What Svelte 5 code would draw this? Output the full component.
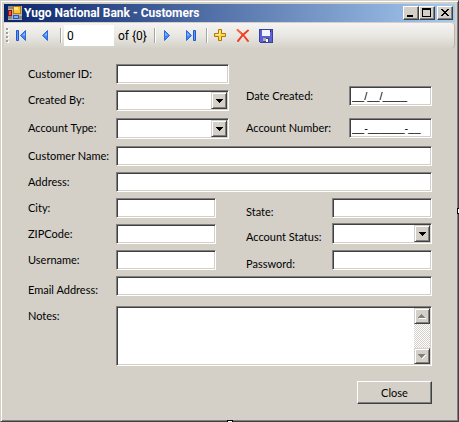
<script lang="ts">
  let position = $state('0');
  let dateCreated = $state('__/__/____');
  let accountNumber = $state('__-______-__');
</script>

{#snippet combo(id: string)}
  <span class="combo">
    <select {id} class="sunken">
      <option value=""></option>
    </select>
    <span class="drop raised" aria-hidden="true">
      <svg width="7" height="4" viewBox="0 0 7 4" shape-rendering="crispEdges">
        <path d="M0 0h7v1H6v1H5v1H4v1H3V3H2V2H1V1H0z" fill="#000" />
      </svg>
    </span>
  </span>
{/snippet}

<main class="window">
  <header class="titlebar">
    <svg class="app-icon" width="16" height="16" viewBox="0 0 16 16" shape-rendering="crispEdges" aria-hidden="true">
      <path d="M1 1h14v14H1z" fill="#b8b4ac" />
      <path d="M1 1h5v3H1zM1 11h4v3H1zM12 11h3v3h-3z" fill="#8a8884" />
      <path d="M6 1h8v8H6z" fill="#b97a08" />
      <path d="M7 2h6v6H7z" fill="#ffc62e" />
      <path d="M7 2h4v3H7z" fill="#ffe78a" />
      <path d="M1 5h4v6H1z" fill="#8e1212" />
      <path d="M2 6h2v4H2z" fill="#f0503c" />
      <path d="M6 10h6v4H6z" fill="#2458c0" />
      <path d="M7 11h4v2H7z" fill="#78b0ff" />
    </svg>
    <h1>Yugo National Bank - Customers</h1>
    <div class="caption-buttons">
      <button class="raised" aria-label="Minimize">
        <svg width="10" height="10" viewBox="0 0 10 10" shape-rendering="crispEdges"><path d="M1 7h6v2H1z" /></svg>
      </button>
      <button class="raised" aria-label="Maximize">
        <svg width="10" height="10" viewBox="0 0 10 10" shape-rendering="crispEdges">
          <path d="M0 0h9v9H0zM1 2v6h7V2z" fill-rule="evenodd" />
        </svg>
      </button>
      <button class="raised close" aria-label="Close window">
        <svg width="10" height="10" viewBox="0 0 10 10" shape-rendering="crispEdges">
          <path d="M1 1h2v1h1v1h2V2h1V1h2v1H8v1H7v1H6v1h1v1h1v1h1v1H7V7H6V6H4v1H3v1H1V7h1V6h1V5h1V4H3V3H2V2H1z" />
        </svg>
      </button>
    </div>
  </header>

  <div class="toolbar" role="toolbar" aria-label="Records">
    <svg class="grip" width="3" height="15" viewBox="0 0 3 15" shape-rendering="crispEdges" aria-hidden="true">
      <path d="M1 1h2v2H1zM1 5h2v2H1zM1 9h2v2H1zM1 13h2v2H1z" fill="#fff" />
      <path d="M0 0h2v2H0zM0 4h2v2H0zM0 8h2v2H0zM0 12h2v2H0z" fill="#a09d94" />
    </svg>
    <button aria-label="Move first">
      <svg width="16" height="16" viewBox="0 0 16 16">
        <path d="M2.500 2.500h2v10h-2z" fill="#5b9bff" stroke="#2257c9" />
        <path d="M11.500 2.500v10L6.500 7.500z" fill="#3f85f7" stroke="#2f68dc" stroke-linejoin="round" />
        <path d="M11 4.500v3H8z" fill="#8dbcff" />
      </svg>
    </button>
    <button aria-label="Move previous">
      <svg width="16" height="16" viewBox="0 0 16 16">
        <path d="M10.500 2.500v10L5.500 7.500z" fill="#3f85f7" stroke="#2f68dc" stroke-linejoin="round" />
        <path d="M10 4.500v3H7z" fill="#8dbcff" />
      </svg>
    </button>
    <span class="separator"></span>
    <input class="position" aria-label="Position" bind:value={position} />
    <span class="count">of &#123;0&#125;</span>
    <span class="separator"></span>
    <button aria-label="Move next">
      <svg width="16" height="16" viewBox="0 0 16 16">
        <path d="M4.500 2.500v10L9.500 7.500z" fill="#3f85f7" stroke="#2f68dc" stroke-linejoin="round" />
        <path d="M5 4.500v3h3z" fill="#8dbcff" />
      </svg>
    </button>
    <button aria-label="Move last">
      <svg width="16" height="16" viewBox="0 0 16 16">
        <path d="M3.500 2.500v10L8.500 7.500z" fill="#3f85f7" stroke="#2f68dc" stroke-linejoin="round" />
        <path d="M4 4.500v3h3z" fill="#8dbcff" />
        <path d="M10.500 2.500h2v10h-2z" fill="#5b9bff" stroke="#2257c9" />
      </svg>
    </button>
    <span class="separator"></span>
    <button aria-label="Add new">
      <svg width="16" height="16" viewBox="0 0 16 16">
        <path d="M6.500 1.500h3v4h4v3h-4v4h-3v-4h-4v-3h4z" fill="#ffd84a" stroke="#b07808" />
        <path d="M7.500 3v3.500H4" fill="none" stroke="#fff0a0" />
      </svg>
    </button>
    <button aria-label="Delete">
      <svg width="16" height="16" viewBox="0 0 16 16">
        <path d="M2.500 2C6 4.500 10 8.500 13 13M13 2.500C9 5.500 5.500 9 3 13" fill="none" stroke="#f23a1c" stroke-width="2" stroke-linecap="round" />
        <path d="M2 2C4 3 5 4.500 6 5.500" fill="none" stroke="#ff8a6a" />
      </svg>
    </button>
    <button aria-label="Save">
      <svg width="16" height="16" viewBox="0 0 16 16" shape-rendering="crispEdges">
        <path d="M1 1h14v14H2v-1H1z" fill="#3a3fa8" />
        <path d="M2 2h12v12H2z" fill="#5c62d6" />
        <path d="M4 2h8v6H4z" fill="#f4f6ff" />
        <path d="M12 2h1v2h-1z" fill="#23286e" />
        <path d="M5 10h6v4H5z" fill="#444a60" />
        <path d="M5 10h3v3H5z" fill="#a8acb8" />
        <path d="M8 11h2v3H8z" fill="#fff" />
      </svg>
    </button>
  </div>

  <form onsubmit={(e) => e.preventDefault()}>
    <div class="columns">
      <div class="stack left">
        <div class="row"><label for="customer-id">Customer ID:</label><input id="customer-id" class="sunken" /></div>
        <div class="row tall"><label for="created-by">Created By:</label>{@render combo('created-by')}</div>
        <div class="row tall"><label for="account-type">Account Type:</label>{@render combo('account-type')}</div>
      </div>
      <div class="stack masked">
        <div class="row"><label for="date-created">Date Created:</label><input id="date-created" class="sunken" bind:value={dateCreated} /></div>
        <div class="row"><label for="account-number">Account Number:</label><input id="account-number" class="sunken" bind:value={accountNumber} /></div>
      </div>
    </div>

    <div class="row"><label for="customer-name">Customer Name:</label><input id="customer-name" class="sunken" /></div>
    <div class="row"><label for="address">Address:</label><input id="address" class="sunken" /></div>

    <div class="columns">
      <div class="stack left short">
        <div class="row"><label for="city">City:</label><input id="city" class="sunken" /></div>
        <div class="row"><label for="zip">ZIPCode:</label><input id="zip" class="sunken" /></div>
        <div class="row"><label for="username">Username:</label><input id="username" class="sunken" autocomplete="off" /></div>
      </div>
      <div class="stack status">
        <div class="row low"><label for="state">State:</label><input id="state" class="sunken" /></div>
        <div class="row low tall"><label for="account-status">Account Status:</label>{@render combo('account-status')}</div>
        <div class="row low"><label for="password">Password:</label><input id="password" type="password" class="sunken" autocomplete="off" /></div>
      </div>
    </div>

    <div class="row low"><label for="email">Email Address:</label><input id="email" class="sunken" /></div>

    <div class="row notes">
      <label for="notes">Notes:</label>
      <div class="memo sunken">
        <textarea id="notes"></textarea>
        <div class="scrollbar">
          <button type="button" class="raised" aria-label="Scroll up" disabled>
            <svg width="8" height="5" viewBox="0 0 8 5" shape-rendering="crispEdges">
              <path d="M1 4h7v1H1z" fill="#fff" />
              <path d="M3 0h1v1h1v1h1v1h1v1H0V3h1V2h1V1h1z" fill="#808080" />
            </svg>
          </button>
          <button type="button" class="raised" aria-label="Scroll down" disabled>
            <svg width="8" height="5" viewBox="0 0 8 5" shape-rendering="crispEdges">
              <path d="M7 1h1v1H7v1H6v1H5v1H4V4h1V3h1V2h1z" fill="#fff" />
              <path d="M0 0h7v1H6v1H5v1H4v1H3V3H2V2H1V1H0z" fill="#808080" />
            </svg>
          </button>
        </div>
      </div>
    </div>

    <div class="actions">
      <button type="button" class="raised push">Close</button>
    </div>
  </form>

  <span class="handle handle-right"></span>
  <span class="handle handle-bottom"></span>
</main>

<style>
  :global(body) {
    background: #d4d0c8;
  }

  .window {
    position: relative;
    box-sizing: border-box;
    min-height: 100vh;
    padding: 3px;
    background: #d4d0c8;
    border: 1px solid;
    border-color: #d4d0c8 #404040 #404040 #d4d0c8;
    box-shadow: inset 1px 1px #fff, inset -1px -1px #808080;
    font-family: Lato, 'Liberation Sans', sans-serif;
    font-size: 11px;
    line-height: 14px;
    color: #000;
  }

  button,
  input,
  select,
  textarea {
    box-sizing: border-box;
    margin: 0;
    padding: 0;
    border: 0;
    border-radius: 0;
    font: inherit;
    color: inherit;
    background: none;
    appearance: none;
    outline: none;
  }

  svg {
    display: block;
    flex: none;
  }

  .sunken {
    background: #fff;
    border: 1px solid;
    border-color: #808080 #fff #fff #808080;
    box-shadow: inset 1px 1px #404040, inset -1px -1px #d4d0c8;
  }

  .raised {
    display: flex;
    align-items: center;
    justify-content: center;
    background: #d4d0c8;
    border: 1px solid;
    border-color: #fff #404040 #404040 #fff;
    box-shadow: inset -1px -1px #808080;
  }

  /* title bar */
  .titlebar {
    display: flex;
    align-items: center;
    height: 18px;
    padding: 0 2px 0 3px;
    background: linear-gradient(to right, #0a246a, #a6caf0);
  }

  h1 {
    flex: 1;
    margin: 0 0 0 1px;
    font-family: Roboto, 'Liberation Sans', sans-serif;
    font-size: 12px;
    line-height: 18px;
    font-weight: bold;
    color: #fff;
    white-space: nowrap;
  }

  .caption-buttons {
    display: flex;
  }

  .caption-buttons button {
    width: 16px;
    height: 14px;
  }

  .caption-buttons .close {
    margin-left: 2px;
  }

  /* record navigator */
  .toolbar {
    display: flex;
    align-items: center;
    height: 25px;
    margin-top: 1px;
    padding-left: 2px;
    border-radius: 0 3px 3px 0;
    background: linear-gradient(#f5f4f2, #e9e7e2 50%, #d5d2ca);
    box-shadow: inset -1px 0 #b8b5ac;
  }

  .toolbar button {
    display: flex;
    align-items: center;
    justify-content: center;
    width: 23px;
    height: 22px;
  }

  .grip {
    margin-right: 1px;
  }

  .separator {
    width: 1px;
    height: 15px;
    margin-left: 4px;
    background: #a6a6a6;
    border-right: 1px solid #fff;
  }

  .position {
    width: 50px;
    height: 21px;
    margin-left: 2px;
    padding: 0 3px;
    background: #fff;
  }

  .position,
  .count {
    font-family: Roboto, 'Liberation Sans', sans-serif;
    font-size: 12px;
  }

  .count {
    width: 36px;
    padding-left: 4px;
    box-sizing: border-box;
    white-space: nowrap;
  }

  /* form */
  form {
    display: flex;
    flex-direction: column;
    gap: 6px;
    padding: 16px 23px 14px 24px;
  }

  .columns {
    display: grid;
    grid-template-columns: 218fr 186fr;
  }

  .stack {
    display: flex;
    flex-direction: column;
    gap: 6px;
    min-width: 0;
  }

  .left {
    padding-right: 17px;
  }

  .left.short {
    padding-right: 30px;
  }

  .masked {
    gap: 12px;
    padding-top: 22px;
  }

  .status {
    gap: 5px;
  }

  .row {
    display: flex;
    align-items: flex-start;
  }

  .row.tall {
    height: 22px;
  }

  label {
    flex: none;
    width: 88px;
    height: 14px;
    padding-top: 3px;
    white-space: nowrap;
  }

  .masked label {
    width: 103px;
  }

  .status label {
    width: 86px;
  }

  /* the label hangs below the middle of its field, without growing the row */
  .low label {
    height: 12px;
    padding-top: 7px;
  }

  .row > input {
    flex: 1;
    min-width: 0;
    height: 20px;
    padding: 0 2px;
  }

  .masked input {
    font-family: 'Liberation Sans', Arial, sans-serif;
  }

  .combo {
    position: relative;
    flex: 1;
    min-width: 0;
    height: 21px;
  }

  .combo select {
    display: block;
    width: 100%;
    height: 21px;
    padding: 0 20px 0 3px;
  }

  .drop {
    position: absolute;
    top: 2px;
    right: 2px;
    box-sizing: border-box;
    width: 16px;
    height: 17px;
    pointer-events: none;
  }

  .drop,
  .scrollbar button {
    border-color: #d4d0c8 #404040 #404040 #d4d0c8;
    box-shadow: inset 1px 1px #fff, inset -1px -1px #808080;
  }

  .notes {
    margin-top: 4px;
  }

  .memo {
    display: flex;
    flex: 1;
    box-sizing: border-box;
    min-width: 0;
    height: 60px;
    padding: 1px;
  }

  textarea {
    flex: 1;
    min-width: 0;
    padding: 1px 2px;
    resize: none;
    overflow: hidden;
  }

  .scrollbar {
    display: flex;
    flex-direction: column;
    justify-content: space-between;
    width: 16px;
    background: repeating-conic-gradient(#fff 0 25%, #d4d0c8 0 50%) 0 0 / 2px 2px;
  }

  .scrollbar button {
    width: 16px;
    height: 16px;
  }

  .actions {
    display: flex;
    justify-content: flex-end;
    margin-top: 9px;
  }

  .push {
    width: 75px;
    height: 23px;
  }

  /* designer resize handles */
  .handle {
    position: absolute;
    box-sizing: border-box;
    width: 6px;
    height: 6px;
    background: #fff;
    border: 1px solid #000;
  }

  .handle-right {
    top: 50%;
    right: -5px;
    margin-top: -3px;
  }

  .handle-bottom {
    left: 50%;
    bottom: -5px;
    margin-left: -3px;
  }

  :global(#app) {
    overflow: hidden;
  }
</style>
